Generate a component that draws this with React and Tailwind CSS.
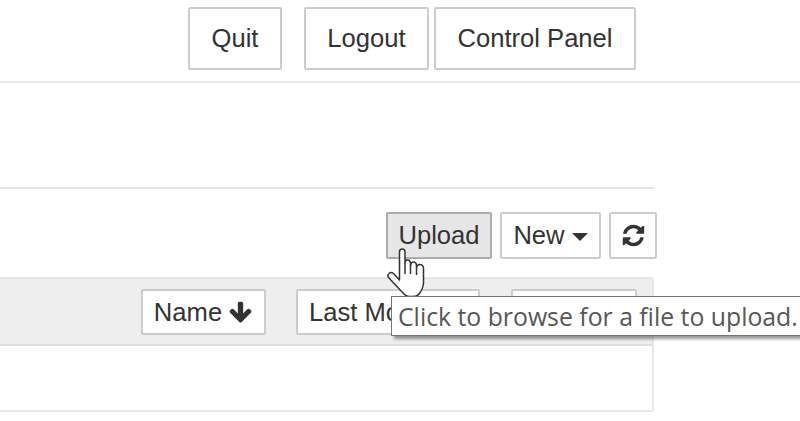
import React from "react";

function TopButton({children, className}) {
    return <div className={"h-[63px] flex items-center justify-center border-2 border-[#ccc] rounded-[2px] bg-white " + className}>{children}</div>
}

function Btn({children, className}) {
    return <div className={"h-[47px] flex items-center justify-center border-2 border-[#ccc] rounded-[2px] bg-white " + className}>{children}</div>
}

function RefreshIcon() {
    return <svg viewBox="0 0 1792 1792" className="w-[25px] h-[25px]" fill="#333">
        <path d="M1639 1056q0 5-1 7-64 268-268 434.5t-478 166.5q-146 0-282.5-55t-243.5-157l-129 129q-19 19-45 19t-45-19-19-45v-448q0-26 19-45t45-19h448q26 0 45 19t19 45-19 45l-137 137q71 66 161 102t187 36q134 0 250-65t186-179q11-17 53-117 8-23 30-23h192q13 0 22.5 9.5t9.5 22.5zm25-800v448q0 26-19 45t-45 19h-448q-26 0-45-19t-19-45 19-45l138-138q-148-137-349-137-134 0-250 65t-186 179q-11 17-53 117-8 23-30 23h-199q-13 0-22.5-9.5t-9.5-22.5v-7q65-268 270-434.5t480-166.5q146 0 284 55.5t245 156.5l130-129q19-19 45-19t45 19 19 45z"/>
    </svg>
}

function ArrowDownIcon() {
    return <svg viewBox="0 0 1792 1792" className="w-[25px] h-[25px] ml-[6px]" fill="#333">
        <path d="M1675 832q0 53-37 90l-651 652q-39 37-91 37-53 0-90-37l-651-652q-38-36-38-90 0-53 38-91l74-75q39-37 91-37 53 0 90 37l294 294v-704q0-52 38-90t90-38h128q52 0 90 38t38 90v704l294-294q37-37 90-37 52 0 91 37l75 75q37 39 37 91z"/>
    </svg>
}

function HandCursor() {
    return <svg viewBox="0 0 42 52" className="absolute left-[385px] top-[247px] w-[42px] h-[52px]" fill="white" stroke="#333" strokeWidth="1.5" strokeLinejoin="round">
        <path d="M14.5 33 L14.5 5 Q14.5 2 17.3 2 Q20 2 20 5 L20 16 Q20 13 22.5 13 Q25 13 25.5 16 L25.5 19 Q26 15 28.5 15 Q31 15 31.5 18 L31.5 21 Q32 17.5 34.7 17.5 Q38 17.5 38.5 21 L38.5 36 Q38 42 34 47 Q32 49.5 28 49.5 L24 49.5 Q21 49.5 18.5 46.5 L3.5 30.5 Q2 28 4 26.5 Q6 24.5 8.5 26.5 Z"/>
        <path d="M20 16 L20 27 M25.5 19 L25.5 27 M31.5 21 L31.5 28" fill="none"/>
    </svg>
}

export default function App() {
    return <div className="relative w-[800px] h-[421px] overflow-hidden bg-white text-[#333] font-['Liberation_Sans',sans-serif]">
        <div className="h-[83px] border-b-2 border-[#e7e7e7] flex pl-[188px] pt-[7px] text-[25.6px]">
            <TopButton className="w-[94px]">Quit</TopButton>
            <TopButton className="w-[125px] ml-[22px]">Logout</TopButton>
            <TopButton className="w-[202px] ml-[5px]">Control Panel</TopButton>
        </div>
        <div className="w-[654px] h-[106px] border-b-2 border-[#e5e5e5]"></div>
        <div className="flex mt-[23px] pl-[386px] text-[25.6px]">
            <Btn className="w-[106px] !bg-[#e6e6e6] !border-[#adadad]">Upload</Btn>
            <Btn className="w-[101px] ml-[8px]">New<span className="ml-[7px] mt-[3px] w-0 h-0 border-x-[8px] border-x-transparent border-t-[8px] border-t-[#333]"></span></Btn>
            <Btn className="w-[48px] ml-[8px]"><RefreshIcon/></Btn>
        </div>
        <div className="w-[654px] h-[135px] mt-[18px] border-2 border-l-0 border-[#e7e7e7] rounded-r-[3px]">
            <div className="h-[67px] bg-[#eee] border-b-2 border-[#e0e0e0] flex pl-[141px] pt-[10px] text-[25.6px]">
                <div className="w-[125px] h-[46px] flex items-center justify-center border-2 border-[#ccc] rounded-[2px] bg-white">Name<ArrowDownIcon/></div>
                <div className="w-[184px] h-[46px] ml-[30px] flex items-center pl-[11px] border-2 border-[#ccc] rounded-[2px] bg-white whitespace-nowrap overflow-hidden">Last Modified</div>
                <div className="w-[126px] h-[46px] ml-[31px] border-2 border-[#ccc] rounded-[2px] bg-white"></div>
            </div>
        </div>
        <HandCursor/>
        <div className="absolute left-[391px] top-[296px] w-[420px] h-[40px] bg-white border border-[#767676] shadow-[3px_3px_3px_rgba(0,0,0,0.4)] pl-[6px] pt-[1px] flex items-center text-[#575757] text-[24.8px] whitespace-nowrap font-['Open_Sans',sans-serif]">
            Click to browse for a file to upload.
        </div>
    </div>
}
